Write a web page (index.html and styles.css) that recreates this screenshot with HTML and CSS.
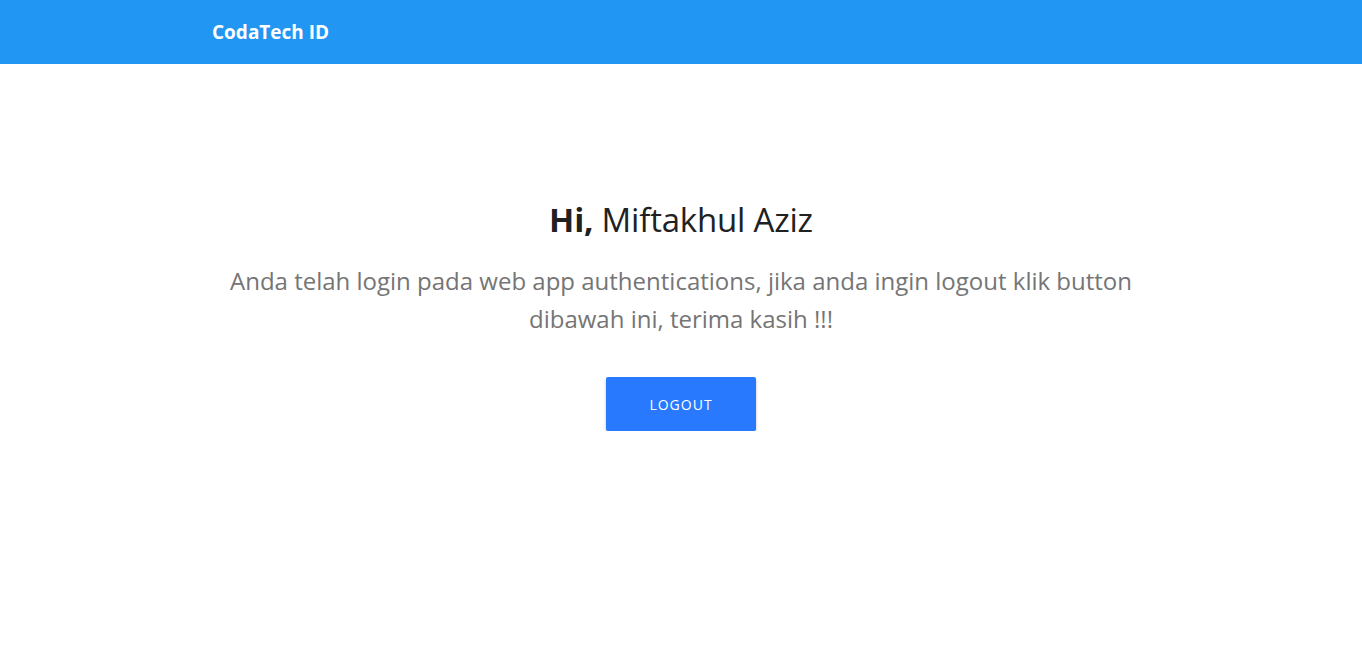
FILE: index.html
```html
<!DOCTYPE html>
<html lang="id">
<head>
<meta charset="utf-8">
<title>CodaTech ID</title>
<link rel="stylesheet" href="styles.css">
</head>
<body>
<header class="navbar">
  <div class="container">
    <span class="brand">CodaTech ID</span>
  </div>
</header>
<main class="content">
  <div class="container center">
    <h1 class="title"><strong>Hi,</strong> Miftakhul Aziz</h1>
    <p class="lead">Anda telah login pada web app authentications, jika anda ingin logout klik button dibawah ini, terima kasih !!!</p>
    <button class="btn">LOGOUT</button>
  </div>
</main>
</body>
</html>
```

FILE: styles.css
```css
* { box-sizing: border-box; }
html, body { margin: 0; padding: 0; }
body {
  font-family: "Open Sans", "Noto Sans", sans-serif;
  background: #fff;
  color: #212121;
}
.container {
  width: 962px;
  margin: 0 auto;
  padding: 0 12px;
}
.navbar {
  height: 64px;
  background: #2196f3;
  display: flex;
  align-items: center;
}
.brand {
  color: #fff;
  font-weight: 700;
  font-size: 19px;
}
.content { padding-top: 134px; }
.center {
  display: flex;
  flex-direction: column;
  align-items: center;
  text-align: center;
}
.title {
  margin: 0;
  font-size: 33px;
  font-weight: 400;
  line-height: 44px;
  color: #212121;
  letter-spacing: -0.2px;
}
.title strong { font-weight: 700; }
.lead {
  margin: 20px 0 0;
  max-width: 925px;
  font-size: 24px;
  line-height: 38px;
  color: #757575;
  font-weight: 400;
}
.btn {
  margin-top: 39px;
  width: 150px;
  height: 54px;
  background: #2979ff;
  color: #fff;
  border: none;
  border-radius: 2px;
  font-family: inherit;
  font-size: 14px;
  letter-spacing: 1px;
  box-shadow: 0 2px 3px rgba(0,0,0,0.25);
  cursor: pointer;
}
```
